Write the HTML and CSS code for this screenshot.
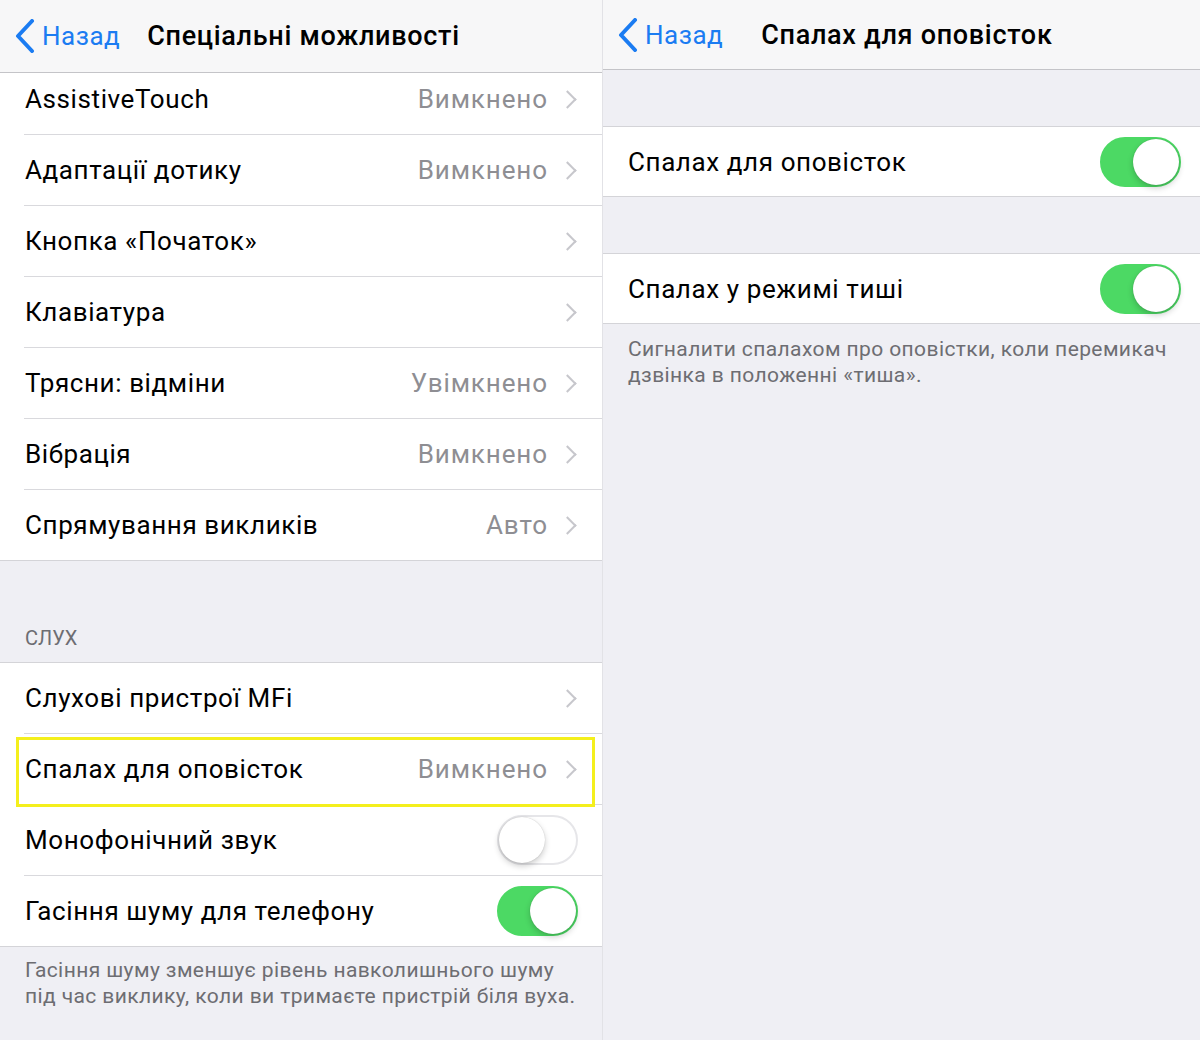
FILE: index.html
```html
<!DOCTYPE html>
<html lang="uk">
<head>
    <meta charset="UTF-8">
    <meta name="viewport" content="width=device-width, initial-scale=1.0">
    <title>Спеціальні можливості</title>
    <link rel="stylesheet" href="styles.css">
</head>
<body>
    <div class="screens">
        <!-- left screen: accessibility list -->
        <div class="screen screen-left">
            <div class="navbar navbar-tall">
                <a class="back" href="#">
                    <svg class="back-chevron" width="22" height="34" viewBox="0 0 22 34"><path d="M18 2 L4 17 L18 32" fill="none" stroke="#1b7cf2" stroke-width="4" stroke-linecap="round" stroke-linejoin="round"/></svg>
                    <span>Назад</span>
                </a>
                <div class="nav-title">Спеціальні можливості</div>
            </div>

            <div class="group group-scrolled">
                <div class="row"><div class="row-inner"><span class="label">AssistiveTouch</span><span class="value">Вимкнено</span><span class="chev"></span></div></div>
                <div class="row"><div class="row-inner"><span class="label">Адаптації дотику</span><span class="value">Вимкнено</span><span class="chev"></span></div></div>
                <div class="row"><div class="row-inner"><span class="label">Кнопка «Початок»</span><span class="chev"></span></div></div>
                <div class="row"><div class="row-inner"><span class="label">Клавіатура</span><span class="chev"></span></div></div>
                <div class="row"><div class="row-inner"><span class="label">Трясни: відміни</span><span class="value">Увімкнено</span><span class="chev"></span></div></div>
                <div class="row"><div class="row-inner"><span class="label">Вібрація</span><span class="value">Вимкнено</span><span class="chev"></span></div></div>
                <div class="row"><div class="row-inner"><span class="label">Спрямування викликів</span><span class="value">Авто</span><span class="chev"></span></div></div>
            </div>

            <div class="section-header">СЛУХ</div>
            <div class="group">
                <div class="row"><div class="row-inner"><span class="label">Слухові пристрої MFi</span><span class="chev"></span></div></div>
                <div class="row row-marked">
                    <div class="row-inner"><span class="label">Спалах для оповісток</span><span class="value">Вимкнено</span><span class="chev"></span></div>
                    <div class="marker"></div>
                </div>
                <div class="row"><div class="row-inner"><span class="label">Монофонічний звук</span><span class="toggle"></span></div></div>
                <div class="row"><div class="row-inner"><span class="label">Гасіння шуму для телефону</span><span class="toggle on"></span></div></div>
            </div>
            <div class="footer-note">Гасіння шуму зменшує рівень навколишнього шуму під час виклику, коли ви тримаєте пристрій біля вуха.</div>
        </div>

        <!-- right screen: LED flash -->
        <div class="screen screen-right">
            <div class="navbar">
                <a class="back" href="#">
                    <svg class="back-chevron" width="22" height="34" viewBox="0 0 22 34"><path d="M18 2 L4 17 L18 32" fill="none" stroke="#1b7cf2" stroke-width="4" stroke-linecap="round" stroke-linejoin="round"/></svg>
                    <span>Назад</span>
                </a>
                <div class="nav-title nav-title-wide">Спалах для оповісток</div>
            </div>

            <div class="group group-spaced">
                <div class="row row-short"><div class="row-inner"><span class="label">Спалах для оповісток</span><span class="toggle on"></span></div></div>
            </div>
            <div class="group group-spaced">
                <div class="row row-short"><div class="row-inner"><span class="label">Спалах у режимі тиші</span><span class="toggle on"></span></div></div>
            </div>
            <div class="footer-note">Сигналити спалахом про оповістки, коли перемикач дзвінка в положенні «тиша».</div>
        </div>
    </div>
</body>
</html>
```

FILE: styles.css
```css
body {
    margin: 0;
    font-family: Roboto, "Noto Sans", Arial, sans-serif;
    background-color: #efeff4;
    color: #000;
}
.screens {
    display: flex;
    width: 1200px;
    height: 1040px;
    overflow: hidden;
}
.screen {
    background-color: #efeff4;
    overflow: hidden;
}
.screen-left {
    width: 603px;
    border-right: 1px solid #e2e2e6;
    box-sizing: border-box;
}
.screen-right {
    flex: 1;
}
.navbar {
    position: relative;
    z-index: 1;
    display: flex;
    align-items: center;
    height: 69px;
    padding-left: 14px;
    background-color: #f7f7f8;
    border-bottom: 1px solid #c4c4c8;
}
.navbar-tall {
    height: 72px;
}
.back {
    display: flex;
    align-items: center;
    gap: 6px;
    color: #1b7cf2;
    text-decoration: none;
    font-size: 26px;
    letter-spacing: 0.5px;
}
.nav-title {
    margin-left: 27px;
    font-size: 27px;
    font-weight: 500;
    letter-spacing: 0.7px;
}
.nav-title-wide {
    margin-left: 38px;
}
.group {
    background: white;
    border-top: 1px solid #d4d4d8;
    border-bottom: 1px solid #d4d4d8;
}
.group-scrolled {
    margin-top: -9px;
    border-top: none;
}
.group-spaced {
    margin-top: 56px;
}
.row {
    position: relative;
    padding-left: 24px;
}
.row-inner {
    display: flex;
    align-items: center;
    height: 70px;
    padding-right: 24px;
    border-bottom: 1px solid #d9d9dd;
}
.row:last-child .row-inner {
    border-bottom: none;
}
.row-short .row-inner {
    height: 69px;
    padding-right: 19px;
}
.label {
    flex: 1;
    font-size: 26px;
    letter-spacing: 0.6px;
    padding-left: 1px;
}
.value {
    font-size: 26px;
    letter-spacing: 0.9px;
    color: #8e8e93;
    margin-right: 13px;
}
.chev {
    width: 11px;
    height: 11px;
    margin-right: 4px;
    border-top: 2.5px solid #c7c7cc;
    border-right: 2.5px solid #c7c7cc;
    transform: rotate(45deg);
}
.toggle {
    position: relative;
    width: 81px;
    height: 50px;
    box-sizing: border-box;
    border-radius: 25px;
    border: 2px solid #e6e6e9;
    background: white;
}
.toggle::after {
    content: "";
    position: absolute;
    top: 0;
    left: 0;
    width: 46px;
    height: 46px;
    border-radius: 50%;
    background: white;
    box-shadow: 0 3px 6px rgba(0,0,0,0.2), 0 0 1px rgba(0,0,0,0.25);
}
.toggle.on {
    background: #4cd964;
    border-color: #4cd964;
}
.toggle.on::after {
    left: 31px;
}
.marker {
    position: absolute;
    left: 16px;
    right: 7px;
    top: 3px;
    height: 70px;
    box-sizing: border-box;
    border: 3px solid #f4ef1c;
}
.section-header {
    padding: 65px 25px 12px;
    font-size: 20px;
    color: #6d6d72;
}
.footer-note {
    padding: 10px 25px;
    font-size: 21px;
    line-height: 26px;
    letter-spacing: 0.4px;
    color: #6d6d72;
}
.screen-right .footer-note {
    padding-top: 12px;
    padding-right: 20px;
}
```
